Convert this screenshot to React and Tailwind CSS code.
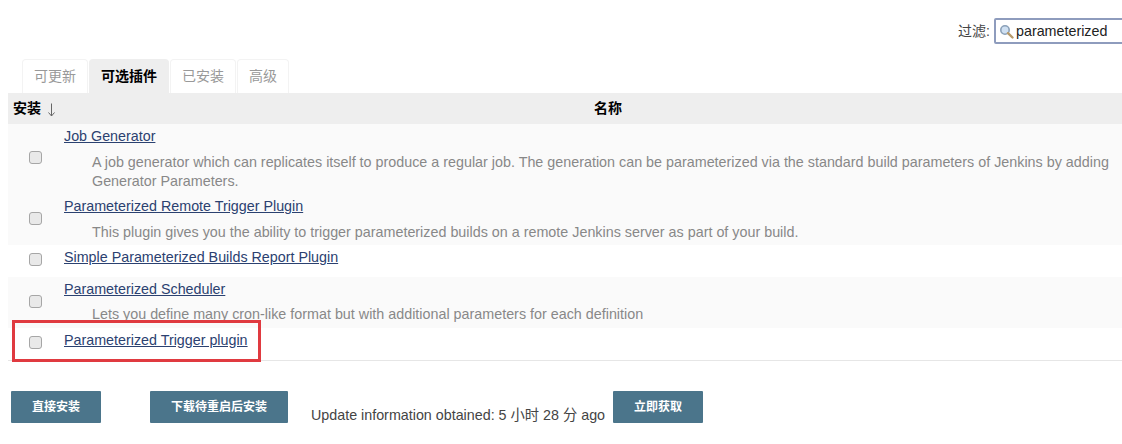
const FF = "font-['Liberation_Sans','Noto_Sans_CJK_SC',sans-serif]";

function Check() {
  return (
    <span className="block w-[13px] h-[13px] rounded-[3px] border border-[#a6a6a6] bg-[#e9e9e9]" />
  );
}

function Row({ name, desc, h, bg, checkTop, top, gap = "pt-[7px]", last }) {
  return (
    <div className={`flex ${h} ${bg} ${last ? "border-b border-[#e6e6e6]" : ""}`}>
      <div className="w-[56px] pl-[21px] shrink-0 flex items-start">
        <div className={checkTop}><Check /></div>
      </div>
      <div className={`flex-1 ${top}`}>
        <a className="text-[#2b4170] underline text-[14.3px] leading-5 block">{name}</a>
        {desc && <div className={`pl-[28px] ${gap} pr-[4px] text-[14.34px] leading-[19px] text-[#888888]`}>{desc}</div>}
      </div>
    </div>
  );
}

function Btn({ children, w }) {
  return (
    <button className={`${w} h-8 bg-[#4b758b] rounded-[1px] text-white text-[12px] font-bold shrink-0`}>{children}</button>
  );
}

function Tab({ children, active }) {
  return (
    <div className={`h-[34px] px-[11px] flex items-center rounded-t border-x border-t text-[14px] ${active ? "bg-[#eeeeee] border-[#eeeeee] text-black font-bold" : "bg-white border-[#f3f3f3] text-[#999999]"}`}>
      {children}
    </div>
  );
}

export default function App() {
  return (
    <div className={`${FF} relative w-[1122px] h-[444px] overflow-hidden bg-white text-[#333333]`}>
      <div className="h-[59px] flex justify-end items-start pt-[18px]">
        <span className="text-[14px] leading-[26px] mr-[4px] text-[#444]">过滤:</span>
        <div className="w-[132px] -mr-[4px] shrink-0 h-[26px] border-2 border-[#8e9cbd] rounded-[2px] flex items-center pl-[3px] bg-white">
          <svg width="15" height="15" viewBox="0 0 15 15" className="shrink-0">
            <circle cx="6" cy="6" r="4.2" fill="#cfe0f2" stroke="#8aa0b8" strokeWidth="1.6" />
            <path d="M9 9.2 L13.5 13.5" stroke="#b79a6a" strokeWidth="2.4" strokeLinecap="round" />
          </svg>
          <span className="ml-[2px] mt-[2px] text-[14.3px] text-[#222]">parameterized</span>
        </div>
      </div>
      <div className="flex pl-[22px] gap-[1px]">
        <Tab>可更新</Tab>
        <Tab active>可选插件</Tab>
        <Tab>已安装</Tab>
        <Tab>高级</Tab>
      </div>
      <div className="ml-2">
        <div className="flex h-[31px] bg-[#eeeeee] items-center text-[14px] font-bold text-black">
          <div className="w-[54px] pl-[5px] shrink-0 flex items-center gap-[6px]">
            安装
            <svg width="9" height="14" viewBox="0 0 9 14" className="shrink-0 mt-[2px]">
              <path d="M4.5 0.5 V13 M1.5 9.5 L4.5 13 L7.5 9.5" fill="none" stroke="#666" strokeWidth="1" />
            </svg>
          </div>
          <div className="flex-1 text-center pl-[32px]">名称</div>
        </div>
        <Row h="h-[72px]" bg="bg-[#fafafa]" checkTop="pt-[27px]" top="pt-[2px]" name="Job Generator"
          desc="A job generator which can replicates itself to produce a regular job. The generation can be parameterized via the standard build parameters of Jenkins by adding Generator Parameters." />
        <Row h="h-[49px]" bg="bg-[#fafafa]" checkTop="pt-[16px]" top="pt-0" name="Parameterized Remote Trigger Plugin"
          desc="This plugin gives you the ability to trigger parameterized builds on a remote Jenkins server as part of your build." />
        <Row h="h-[32px]" bg="bg-white" checkTop="pt-[8px]" top="pt-[2px]" name="Simple Parameterized Builds Report Plugin" />
        <Row h="h-[51px]" bg="bg-[#fafafa]" checkTop="pt-[18px]" top="pt-[2px]" gap="pt-[6px]" name="Parameterized Scheduler"
          desc="Lets you define many cron-like format but with additional parameters for each definition" />
        <Row h="h-[33px]" bg="bg-white" checkTop="pt-[8px]" top="pt-[2px]" name="Parameterized Trigger plugin" last />
      </div>
      <div className="flex items-end pl-[11px] pt-[30px]">
        <Btn w="w-[90px]">直接安装</Btn>
        <div className="w-[49px]" />
        <Btn w="w-[138px]">下载待重启后安装</Btn>
        <span className="ml-[23px] text-[14.3px] leading-5 text-[#444] w-[302px] shrink-0 -mb-[2px]">Update information obtained: 5 小时 28 分 ago</span>
        <Btn w="w-[90px]">立即获取</Btn>
      </div>
      <div className="absolute left-[12px] top-[320px] w-[249px] h-[42px] border-[3px] border-[#e03a40]" />
    </div>
  );
}
